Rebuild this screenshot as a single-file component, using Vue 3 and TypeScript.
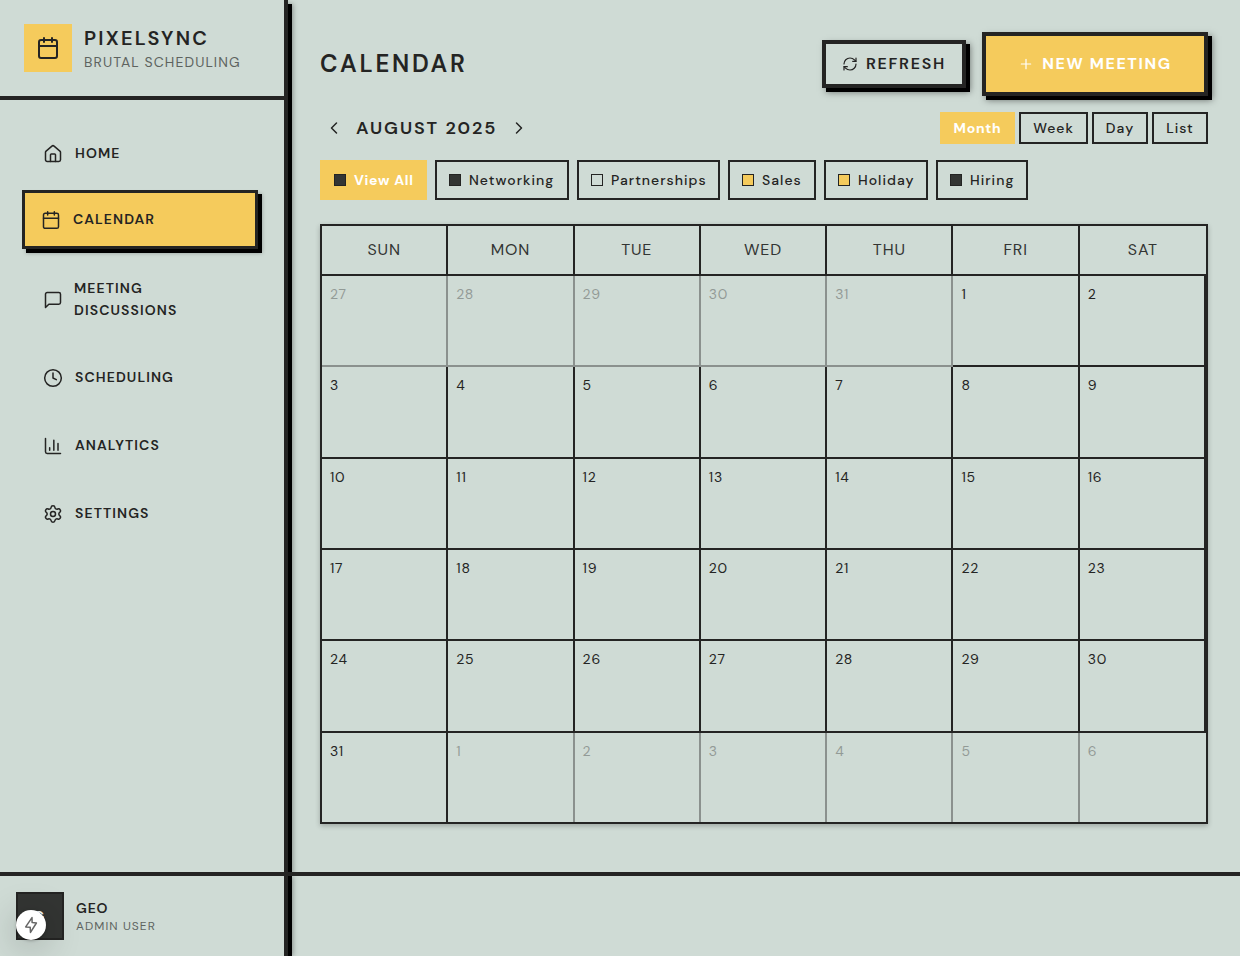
<script setup lang="ts">
interface NavItem { key: string; label: string; active?: boolean }
interface Tag { key: string; label: string; tone: 'dark' | 'plain' | 'gold'; active?: boolean }
interface Day { n: number; other: boolean }

const nav: NavItem[] = [
  { key: 'home', label: 'Home' },
  { key: 'schedule', label: 'Calendar', active: true },
  { key: 'discussions', label: 'Meeting Discussions' },
  { key: 'scheduling', label: 'Scheduling' },
  { key: 'analytics', label: 'Analytics' },
  { key: 'settings', label: 'Settings' },
]

const views = ['Month', 'Week', 'Day', 'List']

const tags: Tag[] = [
  { key: 'all', label: 'View All', tone: 'dark', active: true },
  { key: 'networking', label: 'Networking', tone: 'dark' },
  { key: 'partnerships', label: 'Partnerships', tone: 'plain' },
  { key: 'sales', label: 'Sales', tone: 'gold' },
  { key: 'holiday', label: 'Holiday', tone: 'gold' },
  { key: 'hiring', label: 'Hiring', tone: 'dark' },
]

const weekdays = ['Sun', 'Mon', 'Tue', 'Wed', 'Thu', 'Fri', 'Sat']

const days: Day[] = Array.from({ length: 42 }, (_, i) => {
  const d = new Date(2025, 6, 27 + i)
  return { n: d.getDate(), other: d.getMonth() !== 7 }
})
</script>

<template>
  <div class="app">
    <div class="body">
      <aside class="sidebar">
        <div class="brand">
          <div class="logo">
            <svg class="icon" viewBox="0 0 24 24"><path d="M8 2v4M16 2v4M3 10h18" /><rect x="3" y="4" width="18" height="18" rx="2" /></svg>
          </div>
          <div>
            <div class="brand-name">PIXELSYNC</div>
            <div class="brand-sub">BRUTAL SCHEDULING</div>
          </div>
        </div>
        <nav class="nav">
          <a v-for="item in nav" :key="item.key" class="nav-item" :class="[item.key, { active: item.active }]">
            <svg class="icon" viewBox="0 0 24 24">
              <template v-if="item.key === 'home'">
                <path d="M15 21v-8a1 1 0 0 0-1-1h-4a1 1 0 0 0-1 1v8" />
                <path d="M3 10a2 2 0 0 1 .709-1.528l7-5.999a2 2 0 0 1 2.582 0l7 5.999A2 2 0 0 1 21 10v9a2 2 0 0 1-2 2H5a2 2 0 0 1-2-2z" />
              </template>
              <template v-else-if="item.key === 'schedule'">
                <path d="M8 2v4M16 2v4M3 10h18" /><rect x="3" y="4" width="18" height="18" rx="2" />
              </template>
              <path v-else-if="item.key === 'discussions'" d="M21 15a2 2 0 0 1-2 2H7l-4 4V5a2 2 0 0 1 2-2h14a2 2 0 0 1 2 2z" />
              <template v-else-if="item.key === 'scheduling'">
                <circle cx="12" cy="12" r="10" /><path d="M12 6v6l4 2" />
              </template>
              <path v-else-if="item.key === 'analytics'" d="M3 3v16a2 2 0 0 0 2 2h16M18 17V9M13 17V5M8 17v-3" />
              <template v-else>
                <path d="M9.671 4.136a2.34 2.34 0 0 1 4.659 0 2.34 2.34 0 0 0 3.319 1.915 2.34 2.34 0 0 1 2.33 4.033 2.34 2.34 0 0 0 0 3.831 2.34 2.34 0 0 1-2.33 4.033 2.34 2.34 0 0 0-3.319 1.915 2.34 2.34 0 0 1-4.659 0 2.34 2.34 0 0 0-3.32-1.915 2.34 2.34 0 0 1-2.33-4.033 2.34 2.34 0 0 0 0-3.831A2.34 2.34 0 0 1 6.35 6.051a2.34 2.34 0 0 0 3.319-1.915" />
                <circle cx="12" cy="12" r="3" />
              </template>
            </svg>
            <span>{{ item.label }}</span>
          </a>
        </nav>
      </aside>

      <main class="main">
        <header class="head">
          <h1>CALENDAR</h1>
          <div class="actions">
            <button class="btn refresh">
              <svg class="icon" viewBox="0 0 24 24"><path d="M3 12a9 9 0 0 1 9-9 9.75 9.75 0 0 1 6.74 2.74L21 8" /><path d="M21 3v5h-5" /><path d="M21 12a9 9 0 0 1-9 9 9.75 9.75 0 0 1-6.74-2.74L3 16" /><path d="M8 16H3v5" /></svg>
              <span>REFRESH</span>
            </button>
            <button class="btn create">
              <svg class="icon" viewBox="0 0 24 24"><path d="M5 12h14M12 5v14" /></svg>
              <span>NEW MEETING</span>
            </button>
          </div>
        </header>

        <div class="toolbar">
          <div class="pager">
            <svg class="icon" viewBox="0 0 24 24"><path d="m15 18-6-6 6-6" /></svg>
            <h2>AUGUST 2025</h2>
            <svg class="icon" viewBox="0 0 24 24"><path d="m9 18 6-6-6-6" /></svg>
          </div>
          <div class="views">
            <button v-for="(v, i) in views" :key="v" class="view" :class="['view-' + v.toLowerCase(), { active: i === 0 }]">{{ v }}</button>
          </div>
        </div>

        <div class="tags">
          <button v-for="t in tags" :key="t.key" class="tag" :class="[t.key, { active: t.active }]">
            <i class="swatch" :class="t.tone"></i><span>{{ t.label }}</span>
          </button>
        </div>

        <section class="calendar">
          <div class="week-head">
            <div v-for="w in weekdays" :key="w" class="weekday">{{ w }}</div>
          </div>
          <div class="days">
            <div v-for="(d, i) in days" :key="i" class="day" :class="{ other: d.other }"><span>{{ d.n }}</span></div>
          </div>
        </section>
      </main>
    </div>

    <footer class="footer">
      <div class="account">
        <div class="avatar">
          G
          <div class="bolt">
            <svg viewBox="0 0 18 18"><path d="M10 1.6 3.7 10.9l4.5.4.3 5.1 5.9-9.4-4.3-.4z" /></svg>
          </div>
        </div>
        <div>
          <div class="user">GEO</div>
          <div class="role">ADMIN USER</div>
        </div>
      </div>
    </footer>
  </div>
</template>

<style>
body { margin: 0; background: #cfdbd5; }
</style>

<style scoped>
* { box-sizing: border-box; }
.app {
  --ink: #242423; --soft: #333533; --gold: #f5cb5c; --bg: #cfdbd5;
  width: 1240px; height: 956px; overflow: hidden;
  display: flex; flex-direction: column;
  background: var(--bg); color: var(--ink);
  font-family: "DM Sans", Inter, "Liberation Sans", sans-serif;
}
h1, h2 { margin: 0; }
button { font-family: inherit; color: inherit; background: transparent; margin: 0; padding: 0; white-space: nowrap; }
.icon { fill: none; stroke: currentColor; stroke-width: 2; stroke-linecap: round; stroke-linejoin: round; flex: none; display: block; }
.body { display: flex; height: 872px; flex: none; }

.sidebar { width: 288px; flex: none; border-right: 4px solid var(--ink); box-shadow: 4px 4px 0 #000, 5px 4px 5px rgba(0,0,0,.35); }
.brand { height: 100px; border-bottom: 4px solid var(--ink); padding: 0 24px; display: flex; align-items: center; gap: 12px; white-space: nowrap; }
.logo { width: 48px; height: 48px; background: var(--gold); display: flex; align-items: center; justify-content: center; }
.logo .icon { width: 24px; height: 24px; }
.brand-name { font-size: 20px; font-weight: 600; letter-spacing: 2.25px; line-height: 28px; }
.brand-sub { font-size: 14px; letter-spacing: 1.07px; line-height: 20px; color: var(--soft); opacity: .72; }

.nav { padding: 24px; display: flex; flex-direction: column; gap: 8px; }
.nav-item { height: 60px; padding-left: 19px; display: flex; align-items: center; gap: 12px; font-size: 14px; font-weight: 600; letter-spacing: 1.1px; line-height: 22px; text-transform: uppercase; }
.nav-item span { padding-bottom: 1.5px; }
.nav-item .icon { width: 20px; height: 20px; stroke-width: 1.8; }
.nav-item.active { height: 59px; margin: -2px 2px 1px -2px; padding-left: 16px; background: var(--gold); border: 3px solid var(--ink); box-shadow: 4px 4px 0 #000, 4px 4px 4px rgba(0,0,0,.3); }
.nav-item.discussions { height: 82px; padding-right: 40px; gap: 11px; padding-top: 1px; }

.main { flex: 1; padding: 32px 32px 0; }
.head { height: 64px; display: flex; justify-content: space-between; align-items: center; }
h1 { font-size: 24px; font-weight: 600; letter-spacing: 2.75px; line-height: 32px; }
.actions { display: flex; align-items: center; gap: 16px; }
.btn { border: 4px solid var(--ink); display: flex; align-items: center; justify-content: center; gap: 8px; font-size: 16px; box-shadow: 4px 4px 0 #000, 4px 4px 7px rgba(0,0,0,.5); }
.btn .icon { width: 16px; height: 16px; stroke-width: 1.8; }
.btn span { padding-bottom: 1.5px; }
.refresh { width: 144px; height: 48px; font-weight: 600; letter-spacing: 1.75px; }
.create { width: 226px; height: 64px; font-weight: 700; letter-spacing: 1.6px; background: var(--gold); color: #fff; }

.toolbar { height: 32px; margin-top: 16px; display: flex; justify-content: space-between; }
.pager { display: flex; align-items: center; padding-left: 4px; gap: 12px; }
.pager .icon { width: 20px; height: 20px; stroke-width: 1.8; }
h2 { width: 141px; font-size: 18px; font-weight: 600; letter-spacing: 1.95px; white-space: nowrap; }
.views { display: flex; gap: 4px; }
.view { height: 32px; border: 2px solid var(--ink); font-size: 14px; font-weight: 500; letter-spacing: 1px; }
.view-month { width: 75px; }
.view-week { width: 69px; }
.view-day, .view-list { width: 56px; }

.tags { display: flex; gap: 8px; margin-top: 16px; }
.tag { height: 40px; border: 2px solid var(--ink); padding-left: 12px; display: flex; align-items: center; gap: 8px; font-size: 14px; font-weight: 500; letter-spacing: 1.03px; }
.tag.active, .view.active { border-color: var(--gold); background: var(--gold); color: #fff; font-weight: 700; letter-spacing: .7px; }
.all { width: 107px; } .networking { width: 134px; } .partnerships { width: 143px; }
.sales { width: 88px; } .holiday { width: 104px; } .hiring { width: 92px; }
.swatch { width: 12px; height: 12px; border: 1px solid var(--ink); flex: none; }
.swatch.dark { background: var(--soft); } .swatch.gold { background: var(--gold); }

.calendar { margin-top: 24px; height: 600px; border: 2px solid var(--ink); display: flex; flex-direction: column; box-shadow: 0 2px 5px rgba(0,0,0,.24); }
.week-head { height: 50px; flex: none; display: grid; grid-template-columns: repeat(7, 1fr); border-bottom: 2px solid var(--ink); }
.weekday { border-right: 2px solid var(--ink); text-align: center; font-size: 16px; line-height: 48px; letter-spacing: .85px; color: var(--soft); text-transform: uppercase; }
.weekday:last-child { border-right: 0; }
.days { flex: 1; display: grid; grid-template-columns: repeat(7, 1fr); grid-template-rows: repeat(5, 91.35px) 1fr; }
.day { border-right: 2px solid var(--ink); border-bottom: 2px solid var(--ink); padding: 8px; font-size: 14px; line-height: 20px; letter-spacing: .75px; }
.day.other { border-color: #8b918e; }
.day.other span { opacity: .35; }
.day:nth-child(n+36) { border-bottom: 0; }
.day:last-child { border-right: 0; }

.footer { position: relative; height: 84px; flex: none; border-top: 4px solid var(--ink); background: var(--bg); }
.account { width: 288px; height: 80px; border-right: 4px solid var(--ink); box-shadow: 4px 0 0 #000, 5px 0 5px rgba(0,0,0,.35); clip-path: inset(0 -16px 0 0); padding-left: 16px; display: flex; align-items: center; gap: 12px; }
.avatar { position: relative; width: 48px; height: 48px; border: 2px solid var(--ink); background: var(--soft); color: #fff; font-size: 14px; font-weight: 600; line-height: 44px; text-align: center; padding-right: 2px; }
.bolt { position: absolute; left: -2px; top: 16px; width: 30px; height: 30px; border-radius: 50%; background: #fff; display: flex; align-items: center; justify-content: center; box-shadow: 0 6px 36px rgba(0,0,0,.3), 0 1px 3px rgba(0,0,0,.25); }
.bolt svg { width: 18px; height: 18px; fill: none; stroke: #666; stroke-width: 1.5; stroke-linejoin: round; }
.user { font-size: 14px; font-weight: 600; letter-spacing: .85px; line-height: 20px; }
.role { font-size: 12px; letter-spacing: 1.05px; line-height: 16px; color: var(--soft); opacity: .72; }
</style>
